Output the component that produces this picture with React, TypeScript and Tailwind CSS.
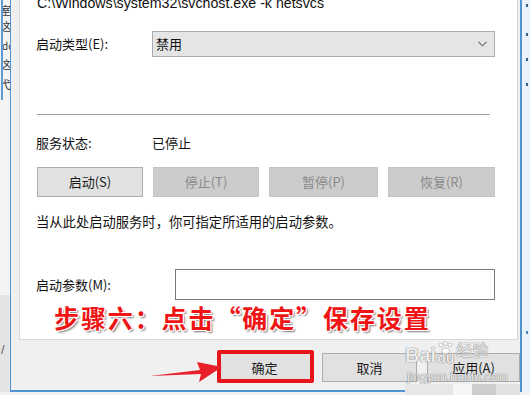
import React from "react";

const cjk = "font-['Segoe_UI','Noto_Sans_CJK_SC',sans-serif]";

function Btn({ w, label, disabled }: { w: string; label: string; disabled?: boolean }) {
  return (
    <div
      className={`${w} h-[30px] flex items-center justify-center border text-[13px] ${
        disabled ? "bg-[#cccccc] border-[#c4c4c4] text-[#8a8a8a]" : "bg-[#e1e1e1] border-[#adadad] text-[#1a1a1a]"
      }`}
    >
      {label}
    </div>
  );
}

function DlgBtn({ w, label }: { w: string; label: string }) {
  return (
    <div className={`${w} h-[29px] flex items-center justify-center border border-[#adadad] bg-[#e1e1e1] text-[13px] text-[#1a1a1a]`}>
      {label}
    </div>
  );
}

export default function App() {
  return (
    <div className={`relative w-[530px] h-[395px] overflow-hidden flex bg-[#ececec] ${cjk}`}>
      {/* left background window strip */}
      <div className="w-[10px] h-full flex flex-col bg-[#f4f4f4] overflow-hidden">
        <div className="h-[100px] border-l-2 border-[#5d9bd3] ml-[1px] flex flex-col text-[11px] leading-[12px] text-[#333] overflow-hidden">
          <span className="mt-[4px] -ml-[3px]">室</span>
          <span className="mt-[4px] -ml-[3px]">这</span>
          <span className="mt-[8px] -ml-[1px] text-[10px]">dc</span>
          <span className="mt-[6px] -ml-[3px]">这</span>
          <span className="mt-[8px] -ml-[3px]">弋</span>
        </div>
        <div className="flex-1" />
        <div className="h-[100px] bg-[#e4e4e4] flex flex-col">
          <span className="mt-[48px] ml-[1px] text-[13px] leading-[14px] text-[#666] font-['Liberation_Sans',sans-serif]">/</span>
        </div>
      </div>

      {/* main dialog window */}
      <div className="w-[512px] h-[392px] flex flex-col bg-[#f0f0f0] border-l border-r-2 border-b-2 border-[#4f94d0]">
        <div className="ml-[8px] mr-[2px] h-[340px] bg-white border-x border-b border-[#d6d6d6] flex flex-col pl-[16px] text-[#111]">
          <div className="-mt-[6px] h-[19px] leading-[19px] ml-[1px] text-[14.2px] font-['Liberation_Sans',sans-serif]">
            C:\Windows\system32\svchost.exe -k netsvcs
          </div>
          <div className="mt-[18px] h-[26px] flex items-center">
            <div className="w-[116px] text-[13px]">启动类型(E):</div>
            <div className="w-[343px] h-[26px] bg-[#e5e5e5] border border-[#adadad] flex items-center justify-between pl-[3px] pr-[7px] text-[13px]">
              <span>禁用</span>
              <svg width="9" height="6" viewBox="0 0 9 6">
                <path d="M0.5 0.8 L4.5 4.8 L8.5 0.8" fill="none" stroke="#6b6b6b" strokeWidth="1.1" />
              </svg>
            </div>
          </div>
          <div className="mt-[57px] ml-[1px] w-[453px] border-t border-[#a0a0a0]" />
          <div className="mt-[19px] h-[18px] flex items-center text-[13px]">
            <div className="w-[116px]">服务状态:</div>
            <div>已停止</div>
          </div>
          <div className="mt-[15px] ml-[1px] flex gap-[10px]">
            <Btn w="w-[106px]" label="启动(S)" />
            <Btn w="w-[106px]" label="停止(T)" disabled />
            <Btn w="w-[109px]" label="暂停(P)" disabled />
            <Btn w="w-[107px]" label="恢复(R)" disabled />
          </div>
          <div className="mt-[16px] h-[18px] leading-[18px] text-[13.3px]">当从此处启动服务时，你可指定所适用的启动参数。</div>
          <div className="mt-[38px] h-[31px] flex items-center text-[13px]">
            <div className="w-[139px]">启动参数(M):</div>
            <div className="w-[320px] h-[31px] bg-white border border-[#7a7a7a]" />
          </div>
        </div>
        <div className="flex-1 flex pt-[13px] pl-[206px] gap-[10px]">
          <DlgBtn w="w-[95px]" label="确定" />
          <DlgBtn w="w-[95px]" label="取消" />
          <DlgBtn w="w-[93px]" label="应用(A)" />
        </div>
      </div>

      {/* right background window strip */}
      <div className="w-[8px] h-full bg-[#e9f1f9] flex flex-col items-end pr-[2px]">
        <div className="mt-[4px] w-[2px] h-[3px] bg-[#3a5f86]" />
        <div className="mt-[26px] w-[2px] h-[3px] bg-[#3a5f86]" />
        <div className="mt-[22px] w-[2px] h-[3px] bg-[#3a5f86]" />
        <div className="mt-[22px] w-[2px] h-[3px] bg-[#3a5f86]" />
        <div className="mt-[245px] w-[2px] h-[3px] bg-[#4a86c8]" />
      </div>

      {/* bottom strip */}
      <div className="absolute left-0 right-0 bottom-0 h-[3px] bg-[#f2f2f2]" />

      {/* annotation: red text */}
      <div className="absolute left-[54px] top-[305px] text-[25px] leading-none font-bold tracking-[1.9px] text-[#f01515] font-['Noto_Sans_CJK_SC',sans-serif] [text-shadow:1px_1px_0_#fff,-1px_-1px_0_#fff,1px_-1px_0_#fff,-1px_1px_0_#fff,2px_2px_2px_#777]">
        步骤六：点击“确定”保存设置
      </div>

      {/* annotation: red box */}
      <div className="absolute left-[217px] top-[350px] w-[97px] h-[33px] border-[4px] border-[#e8141c] rounded-[2px]" />

      {/* annotation: arrow */}
      <svg className="absolute left-[145px] top-[358px]" width="82" height="28" viewBox="0 0 82 28">
        <polygon points="5,18 55,12 52,4 77,9 54,24 56,16" fill="#e8202a" />
      </svg>

      {/* baidu watermark */}
      <div className="absolute left-[405px] top-[339px] flex flex-col text-white/85 [text-shadow:0_0_1px_#777,0_0_1px_#777]">
        <div className="flex items-end h-[26px]">
          <span className="text-[20px] leading-none font-bold font-['Liberation_Sans',sans-serif]">Bai</span>
          <div className="flex flex-col items-center ml-[1px]">
            <svg width="17" height="14" viewBox="0 0 17 14" className="opacity-80">
              <circle cx="4" cy="4" r="2" fill="#fff" stroke="#999" strokeWidth="0.6" />
              <circle cx="8.5" cy="2.5" r="2" fill="#fff" stroke="#999" strokeWidth="0.6" />
              <circle cx="13" cy="4" r="2" fill="#fff" stroke="#999" strokeWidth="0.6" />
              <ellipse cx="8.5" cy="10" rx="4" ry="3" fill="#fff" stroke="#999" strokeWidth="0.6" />
            </svg>
            <span className="text-[14px] leading-none font-bold font-['Liberation_Sans',sans-serif] -mt-[4px]">du</span>
          </div>
          <span className="text-[16px] leading-none ml-[2px] mb-[8px] font-['Noto_Sans_CJK_SC',sans-serif]">经验</span>
        </div>
        <div className="text-[12.5px] leading-[12px] mt-[6px] ml-[2px] font-['Liberation_Sans',sans-serif]">jingyan.baidu.com</div>
      </div>

      {/* mosaic */}
      <div className="absolute left-[405px] top-[384px] flex">
        <div className="w-[48px] h-[11px] bg-[#e7e7e7]" />
        <div className="w-[19px] h-[11px] bg-[#f6f6f6]" />
        <div className="w-[24px] h-[11px] bg-[#cdcdcd]" />
        <div className="w-[24px] h-[11px] bg-[#e2e2e2]" />
      </div>
    </div>
  );
}
